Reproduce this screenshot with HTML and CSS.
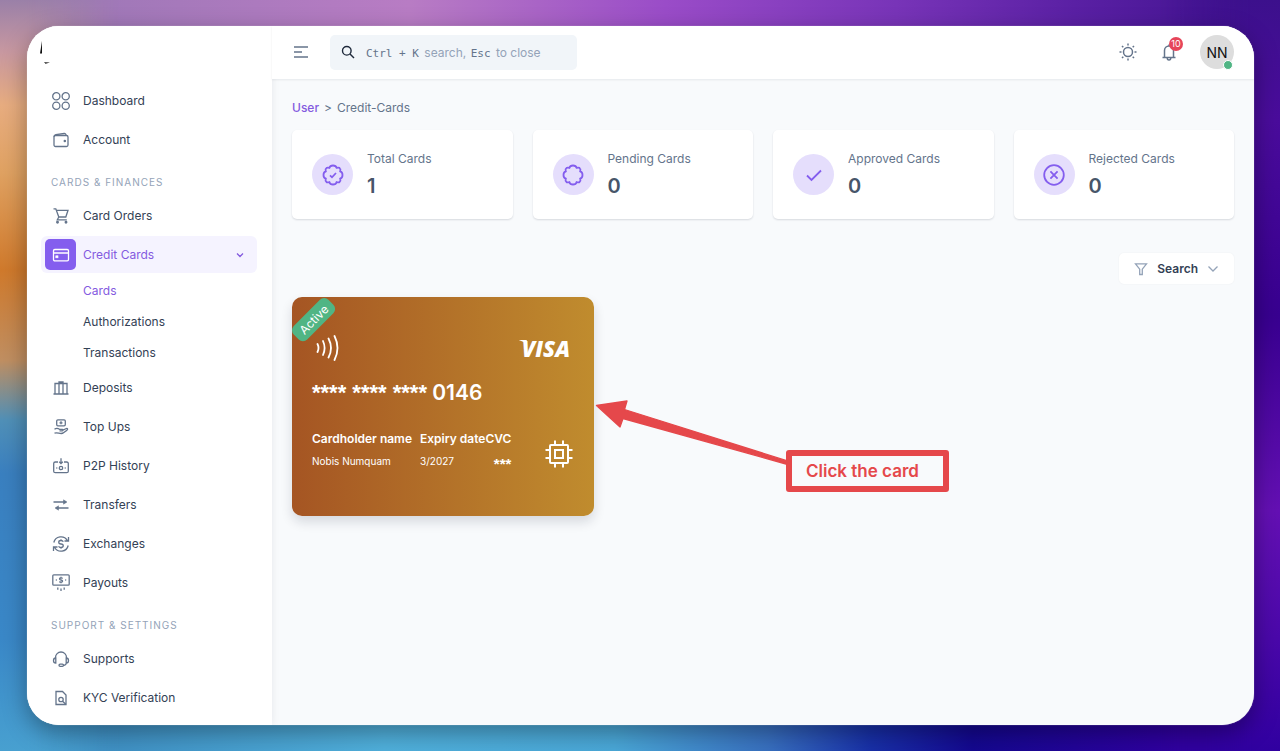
FILE: index.html
```html
<!DOCTYPE html>
<html lang="en">
  <head>
    <meta charset="UTF-8" />
    <meta name="viewport" content="width=device-width, initial-scale=1.0" />
    <title>Credit-Cards</title>
    <link rel="stylesheet" href="styles.css">
  </head>
  <body>
    <div class="window">
      <aside class="sidebar">
        <a class="brand" href="#" aria-label="Home">
          <svg width="34" height="24" viewBox="0 0 34 24"><path d="M1 0v12.500H-1z" fill="#111"/><path d="M3 21.200l6 .4-4.500 1.200z" fill="#111"/></svg>
        </a>
        <nav class="menu">
          <a class="menu-item" href="#">
            <span class="menu-icon"><svg width="20" height="20" viewBox="0 0 20 20"><circle cx="5.300" cy="5.300" r="3.600"/><circle cx="14.700" cy="5.300" r="3.600"/><circle cx="5.300" cy="14.700" r="3.600"/><circle cx="14.700" cy="14.700" r="3.600"/></svg></span>
            Dashboard
          </a>
          <a class="menu-item" href="#">
            <span class="menu-icon"><svg width="20" height="20" viewBox="0 0 20 20"><rect x="3" y="5.500" width="14" height="11" rx="1.500"/><path d="M3 6.800c0-1.600.6-2 1.800-2.200l8.400-1.100c1-.1 1.800.5 1.800 2"/><circle cx="13.800" cy="11" r=".6" fill="currentColor"/></svg></span>
            Account
          </a>

          <h2 class="menu-title">Cards &amp; Finances</h2>
          <a class="menu-item" href="#">
            <span class="menu-icon"><svg width="20" height="20" viewBox="0 0 20 20"><path d="M2.500 2.800h2.300l3 8.200h7l2.200-6.700H5.500M7.800 11l-1.500 2.800h9.500"/><circle cx="6.500" cy="16.300" r=".8" fill="currentColor"/><circle cx="15" cy="16.300" r=".8" fill="currentColor"/></svg></span>
            Card Orders
          </a>
          <a class="menu-item active" href="#">
            <span class="menu-icon"><svg width="20" height="20" viewBox="0 0 20 20"><rect x="2.500" y="4.500" width="15" height="11.300" rx="1.300"/><path d="M2.500 8h15"/><rect x="4.800" y="10.800" width="2.200" height="2" fill="currentColor" stroke-width=".6"/></svg></span>
            Credit Cards
            <svg class="chevron" width="10" height="10" viewBox="0 0 10 10"><path d="M2 3.500l3 3 3-3"/></svg>
          </a>
          <ul class="submenu">
            <li><a class="current" href="#">Cards</a></li>
            <li><a href="#">Authorizations</a></li>
            <li><a href="#">Transactions</a></li>
          </ul>
          <a class="menu-item" href="#">
            <span class="menu-icon"><svg width="20" height="20" viewBox="0 0 20 20"><path d="M2.500 16h15M4 16V5.500h12V16M8 16V4h4v12"/></svg></span>
            Deposits
          </a>
          <a class="menu-item" href="#">
            <span class="menu-icon"><svg width="20" height="20" viewBox="0 0 20 20"><rect x="5.700" y="2.800" width="8.600" height="6" rx="1.200"/><path d="M10 4.300v3M8.500 5.800h3"/><path d="M3.500 12.300c2-1.600 3.700-1 5 0h2.800c1 0 1 1.600 0 1.600H8.500M11.500 13.300l3.800-1.800c1.300-.4 1.700.8.800 1.500-2 1.600-3.600 3.500-6 3.500-2.300 0-3.600-1.200-6.600-.4"/></svg></span>
            Top Ups
          </a>
          <a class="menu-item" href="#">
            <span class="menu-icon"><svg width="20" height="20" viewBox="0 0 20 20"><path d="M7 6H4.300C3.200 6 2.700 6.500 2.700 7.500v7.700c0 1 .5 1.500 1.600 1.500h11.400c1.100 0 1.600-.5 1.600-1.500V7.500c0-1-.5-1.500-1.600-1.500H13"/><path d="M10 2.300v5M8.200 5.700L10 7.500l1.800-1.800"/><circle cx="10" cy="12" r="1.700"/><path d="M5.300 12h1M13.700 12h1"/></svg></span>
            P2P History
          </a>
          <a class="menu-item" href="#">
            <span class="menu-icon"><svg width="20" height="20" viewBox="0 0 20 20"><path d="M2.500 7h12M5.500 13h12"/><path d="M12.500 4.800L16 7l-3.500 2.200zM7.500 10.800L4 13l3.500 2.200z" fill="currentColor" stroke-width=".5"/></svg></span>
            Transfers
          </a>
          <a class="menu-item" href="#">
            <span class="menu-icon"><svg width="20" height="20" viewBox="0 0 20 20"><path d="M2.800 8.500A7.400 7.400 0 0 1 16.400 6.500M17.200 11.500A7.400 7.400 0 0 1 3.600 13.500M17.500 3v4h-4M2.500 17v-4h4"/><path d="M12.300 7.700c-.4-.8-1.200-1.200-2.300-1.200-3 0-3 3.300 0 3.500s3 3.500 0 3.500c-1.200 0-2-.4-2.400-1.300M10 5.300v1.200M10 13.500v1.200"/></svg></span>
            Exchanges
          </a>
          <a class="menu-item" href="#">
            <span class="menu-icon"><svg width="20" height="20" viewBox="0 0 20 20"><rect x="1.800" y="1.800" width="16.400" height="10.400" rx="1"/><path d="M11.600 5.500c-.8-.9-3.200-.6-3.100.5.100 1.200 3 .8 3.100 2 .1 1.200-2.400 1.500-3.200.5M10 3.800v1M10 9.200v1M4.800 7h1M14.200 7h1M6.800 14.500v2.200M10 15.500v2.500M13.200 14.500v2.200"/></svg></span>
            Payouts
          </a>

          <h2 class="menu-title">Support &amp; Settings</h2>
          <a class="menu-item" href="#">
            <span class="menu-icon"><svg width="20" height="20" viewBox="0 0 20 20"><path d="M4.500 9V8.500a5.500 5.500 0 0 1 11 0V9M4.800 9v5.200c-1.500 0-2.300-1-2.300-2.600S3.300 9 4.800 9zM15.200 9v5.200c1.500 0 2.300-1 2.300-2.600S16.700 9 15.200 9zM15.200 14.200c0 1.400-1 1.900-2.700 2.100"/><rect x="8" y="15.200" width="4.500" height="2.200" rx="1.100"/></svg></span>
            Supports
          </a>
          <a class="menu-item" href="#">
            <span class="menu-icon"><svg width="20" height="20" viewBox="0 0 20 20"><path d="M5 3.500h6.500l3.500 3.500v9.500H5z"/><circle cx="10" cy="11.500" r="2.200"/><path d="M11.600 13.200l3.200 3.100"/></svg></span>
            KYC Verification
          </a>
        </nav>
      </aside>

      <div class="main">
        <header class="topbar">
          <button class="icon-button" type="button" aria-label="Toggle sidebar">
            <svg width="18" height="18" viewBox="0 0 18 18"><path d="M2 4h14M2 9h8M2 14h14"/></svg>
          </button>
          <div class="searchbox">
            <svg width="14" height="14" viewBox="0 0 14 14"><circle cx="5.800" cy="5.800" r="4.300"/><path d="M9 9l4 4"/></svg>
            <div class="searchbox-field">
              <input id="search" type="text" />
              <label for="search"><kbd>Ctrl + K</kbd> search, <kbd>Esc</kbd> to close</label>
            </div>
          </div>
          <div class="topbar-actions">
            <button class="icon-button" type="button" aria-label="Theme">
              <svg width="20" height="20" viewBox="0 0 20 20"><circle cx="10" cy="10" r="4.500"/><path d="M10 1.500v2M10 16.500v2M1.500 10h2M16.500 10h2M4 4l1.300 1.300M14.700 14.700L16 16M4 16l1.300-1.300M14.700 5.300L16 4"/></svg>
            </button>
            <button class="icon-button" type="button" aria-label="Notifications">
              <svg width="20" height="20" viewBox="0 0 20 20"><path d="M3.500 15.500h13M5.500 15.500V8.500a4.500 4.500 0 0 1 9 0v7M10 4V2.500M8.200 15.800c0 3 3.600 3 3.600 0"/></svg>
              <span class="count">10</span>
            </button>
            <button class="avatar" type="button">NN<span class="status"></span></button>
          </div>
        </header>

        <main class="content">
          <nav class="breadcrumb"><a href="#">User</a><span>&gt;</span><span>Credit-Cards</span></nav>

          <section class="stats">
            <div class="stat">
              <span class="stat-icon"><svg width="24" height="24" viewBox="0 0 24 24"><path d="M12 2.500Q15 2.500 15.600 4.800Q18.400 4.200 18.700 5.300Q19.900 6 19.200 8.400Q21.500 9 21.500 12Q21.500 15 19.200 15.600Q19.900 18 18.700 18.700Q18 19.900 15.600 19.200Q15 21.500 12 21.500Q9 21.500 8.400 19.200Q6 19.900 5.300 18.700Q4.100 18 4.800 15.600Q2.500 15 2.500 12Q2.500 9 4.800 8.400Q4.100 6 5.300 5.300Q6 4.100 8.400 4.800Q9 2.500 12 2.500z"/><path d="M9 12.300l2 2 4-4.300"/></svg></span>
              <div><p class="stat-label">Total Cards</p><p class="stat-value">1</p></div>
            </div>
            <div class="stat">
              <span class="stat-icon"><svg width="24" height="24" viewBox="0 0 24 24"><path d="M12 2.500Q15 2.500 15.600 4.800Q18.400 4.200 18.700 5.300Q19.900 6 19.200 8.400Q21.500 9 21.500 12Q21.500 15 19.200 15.600Q19.900 18 18.700 18.700Q18 19.900 15.600 19.200Q15 21.500 12 21.500Q9 21.500 8.400 19.200Q6 19.900 5.300 18.700Q4.100 18 4.800 15.600Q2.500 15 2.500 12Q2.500 9 4.800 8.400Q4.100 6 5.300 5.300Q6 4.100 8.400 4.800Q9 2.500 12 2.500z"/></svg></span>
              <div><p class="stat-label">Pending Cards</p><p class="stat-value">0</p></div>
            </div>
            <div class="stat">
              <span class="stat-icon"><svg width="24" height="24" viewBox="0 0 24 24"><path d="M5 12.500l4.500 4.500 9.500-9.500"/></svg></span>
              <div><p class="stat-label">Approved Cards</p><p class="stat-value">0</p></div>
            </div>
            <div class="stat">
              <span class="stat-icon"><svg width="24" height="24" viewBox="0 0 24 24"><circle cx="12" cy="12" r="9.800"/><path d="M8.400 8.400l7.200 7.200M15.600 8.400l-7.200 7.200"/></svg></span>
              <div><p class="stat-label">Rejected Cards</p><p class="stat-value">0</p></div>
            </div>
          </section>

          <div class="toolbar">
            <button class="filter" type="button">
              <svg width="14" height="14" viewBox="0 0 14 14"><path d="M1.500 1.800h11L8.300 7.200v5.300H5.700V7.200z"/></svg>
              Search
              <svg width="12" height="12" viewBox="0 0 12 12"><path d="M1.500 3.500L6 8l4.500-4.500"/></svg>
            </button>
          </div>

          <section class="cards">
            <div class="card-cell">
              <a class="credit-card" href="#">
                <span class="badge">Active</span>
                <span class="card-top">
                  <svg width="30" height="26" viewBox="0 0 30 26"><path d="M5.500 9q2 4 0 8M11 6q3.200 7 0 14M16.500 3.500q5 9.500 0 19M22.500 1q6 12 0 24"/></svg>
                  <span class="visa">VISA</span>
                </span>
                <span class="card-number"><span class="stars">**** **** ****</span> 0146</span>
                <span class="card-bottom">
                  <span class="card-info holder"><b>Cardholder name</b><span>Nobis Numquam</span></span>
                  <span class="card-info"><b>Expiry date</b><span>3/2027</span></span>
                  <span class="card-info cvc"><b>CVC</b><span class="stars">***</span></span>
                  <svg class="chip" width="30" height="30" viewBox="0 0 30 30"><rect x="6" y="6" width="18" height="18" rx="1"/><rect x="11" y="11" width="8" height="8"/><path d="M11 6V1.500M19 6V1.500M11 24v4.500M19 24v4.500M6 11H1.500M6 19H1.500M24 11h4.500M24 19h4.500"/></svg>
                </span>
              </a>
              <div class="callout">
                <svg width="192" height="70" viewBox="0 0 192 70"><path d="M2.500 9.500L33 5l-2.500 8.500L192 64.500v3.500L29 22.500 26 31z"/></svg>
                <p>Click the card</p>
              </div>
            </div>
          </section>
        </main>
      </div>
    </div>
  </body>
</html>
```
FILE: styles.css
```css
* {
  box-sizing: border-box;
}

body {
  position: relative;
  margin: 0;
  padding: 26px 26px 26px 27px;
  min-height: 100vh;
  display: flex;
  font-family: Inter, "Liberation Sans", sans-serif;
  font-size: 12px;
  color: #334155;
  background:
    linear-gradient(90deg, #9a80a8 0, #a078b8 8%, #b87cc4 32%, #9a4cc8 52%, #7834b8 70%, #5a20a4 84%, #3c108c 100%) top / 100% 50% no-repeat,
    linear-gradient(90deg, #48a0d0 0, #3f90c4 8%, #50b0dc 30%, #4aa8d8 48%, #3870c0 60%, #1830a8 68%, #140890 76%, #3000a0 92%, #3000a0 100%) bottom / 100% 50% no-repeat;
}

/* side colours of the backdrop, faded into the top and bottom ones */
body::before {
  content: "";
  position: absolute;
  inset: 0;
  background:
    linear-gradient(180deg, #9a80a8 0, #c898a0 7%, #e8ad80 14%, #e0a262 23%, #d07a2c 36%, #c08f62 48%, #5090b8 56%, #3a80c0 63%, #3a88c8 85%, #48a0d0 100%) left / 50% 100% no-repeat,
    linear-gradient(180deg, #3c108c 0, #4a0c9c 16%, #380090 42%, #6410b4 68%, #4a08aa 85%, #3000a0 100%) right / 50% 100% no-repeat;
  mask-image: linear-gradient(90deg, #000 27px, transparent 120px, transparent calc(100% - 120px), #000 calc(100% - 27px));
}

a {
  color: inherit;
  text-decoration: none;
}

button {
  font: inherit;
  color: inherit;
  border: none;
  background: none;
  padding: 0;
  cursor: pointer;
}

p {
  margin: 0;
}

svg {
  fill: none;
  stroke: currentColor;
  stroke-width: 1.3;
  flex-shrink: 0;
  display: block;
}

.window {
  position: relative;
  flex: 1;
  display: flex;
  border-radius: 32px;
  overflow: hidden;
  background: #f8fafc;
  box-shadow: 0 0 1px rgba(255, 255, 255, 0.8), 0 8px 24px rgba(0, 0, 0, 0.35);
}

/* sidebar */
.sidebar {
  width: 245px;
  flex-shrink: 0;
  padding: 15px;
  padding-bottom: 6px;
  padding-left: 14px;
  background: #fff;
  box-shadow: 0 0 8px rgba(15, 23, 42, 0.08);
}

.brand {
  display: block;
  height: 41px;
}

.brand svg {
  stroke: none;
  overflow: visible;
}

.menu {
  display: flex;
  flex-direction: column;
}

.menu-item {
  display: flex;
  align-items: center;
  gap: 7px;
  height: 37px;
  margin-bottom: 2px;
  padding: 3px 12px 3px 4px;
  border-radius: 6px;
}

.menu-icon {
  display: flex;
  align-items: center;
  justify-content: center;
  width: 31px;
  height: 31px;
  border-radius: 5px;
  color: #64748b;
}

.menu-item.active {
  background: #f5f3ff;
  color: #845adf;
}

.active .menu-icon {
  background: #845eee;
  color: #fff;
}

.chevron {
  margin-left: auto;
}

.menu-title {
  margin: 0;
  padding: 15px 10px 7px;
  font-size: 10px;
  font-weight: 400;
  line-height: 15px;
  letter-spacing: 1px;
  text-transform: uppercase;
  color: #94a3b8;
}

.submenu {
  list-style: none;
  margin: 0 0 1px;
  padding: 0 0 0 42px;
  line-height: 31px;
}

.submenu .current {
  color: #845adf;
}

/* top bar */
.main {
  flex: 1;
  min-width: 0;
}

.topbar {
  display: flex;
  align-items: center;
  gap: 20px;
  height: 53px;
  padding: 0 20px 1px;
  background: #fff;
  box-shadow: 0 1px 2px rgba(15, 23, 42, 0.08);
}

.icon-button {
  position: relative;
  color: #64748b;
}

.icon-button svg {
  stroke-width: 1.5;
}

.searchbox {
  display: flex;
  align-items: center;
  gap: 10px;
  width: 247px;
  height: 35px;
  padding: 0 11px;
  border-radius: 5px;
  background: #f1f5f9;
  color: #1e293b;
}

.searchbox svg {
  stroke-width: 1.4;
}

.searchbox-field {
  flex: 1;
  display: grid;
  align-items: center;
}

.searchbox-field input,
.searchbox-field label {
  grid-area: 1 / 1;
}

.searchbox-field input {
  width: 100%;
  border: none;
  outline: none;
  background: none;
}

.searchbox-field label {
  color: #94a3b8;
  white-space: nowrap;
  pointer-events: none;
}

.searchbox-field input:focus + label {
  visibility: hidden;
}

kbd {
  margin: 0 2px 0 1px;
  font-family: "DejaVu Sans Mono", monospace;
  font-size: 11px;
  color: #64748b;
}

.topbar-actions {
  display: flex;
  align-items: center;
  gap: 21px;
  margin-left: auto;
}

.count {
  position: absolute;
  top: -5px;
  right: -4px;
  width: 14px;
  height: 14px;
  border-radius: 50%;
  background: #e6455a;
  color: #fff;
  font-size: 9px;
  line-height: 14px;
  text-align: center;
}

.avatar {
  position: relative;
  width: 34px;
  height: 34px;
  border-radius: 50%;
  background: #ddd;
  color: #111;
  font-size: 14px;
}

.status {
  position: absolute;
  right: 1px;
  bottom: -1px;
  width: 10px;
  height: 10px;
  border: 1px solid #fff;
  border-radius: 50%;
  background: #50b584;
}

/* content */
.content {
  padding: 20px;
}

.breadcrumb {
  display: flex;
  gap: 5px;
  margin-bottom: 13px;
  line-height: 18px;
  color: #64748b;
}

.breadcrumb a {
  color: #845adf;
  font-weight: 500;
}

.stats {
  display: grid;
  grid-template-columns: repeat(4, 1fr);
  gap: 20px;
}

.stat {
  display: flex;
  align-items: center;
  gap: 14px;
  height: 89px;
  padding: 0 20px;
  border-radius: 5px;
  background: #fff;
  box-shadow: 0 1px 2px rgba(15, 23, 42, 0.14);
}

.stat-icon {
  display: flex;
  align-items: center;
  justify-content: center;
  width: 41px;
  height: 41px;
  border-radius: 50%;
  background: #e5defc;
  color: #845eee;
}

.stat-icon svg {
  stroke-width: 1.8;
}

.stat-label {
  line-height: 20px;
  color: #64748b;
}

.stat-value {
  margin-top: 3px;
  font-size: 20px;
  font-weight: 600;
  line-height: 28px;
  color: #475569;
}

.toolbar {
  display: flex;
  justify-content: flex-end;
  margin: 34px 0 13px;
}

.filter {
  display: flex;
  align-items: center;
  gap: 9px;
  height: 31px;
  padding: 0 15px;
  border-radius: 5px;
  background: #fff;
  box-shadow: 0 0 2px rgba(15, 23, 42, 0.06);
  font-weight: 600;
}

.filter svg {
  color: #94a3b8;
}

/* credit cards */
.cards {
  display: grid;
  grid-template-columns: repeat(3, 1fr);
  gap: 18px;
}

.card-cell {
  position: relative;
}

.credit-card {
  position: relative;
  display: flex;
  flex-direction: column;
  height: 219px;
  padding: 38px 20px 0;
  border-radius: 10px;
  background: linear-gradient(90deg, #a55523, #c08c2e);
  box-shadow: 0 6px 12px rgba(15, 23, 42, 0.14);
  color: #fff;
}

.badge {
  position: absolute;
  top: 13px;
  left: -3px;
  padding: 0 7px;
  border-radius: 6px;
  background: #50b584;
  line-height: 19px;
  transform: rotate(-45deg);
}

.card-top {
  display: flex;
  align-items: center;
  justify-content: space-between;
  height: 26px;
  padding-right: 4px;
}

.card-top svg {
  stroke-width: 1.8;
  stroke-linecap: round;
}

.visa {
  position: relative;
  font-family: "Open Sans", sans-serif;
  font-size: 22px;
  font-style: italic;
  font-weight: 800;
  line-height: 26px;
}

/* flick on the left of the V */
.visa::before {
  content: "";
  position: absolute;
  top: 5px;
  left: -3px;
  width: 8px;
  height: 5px;
  background: #fff;
  clip-path: polygon(0 0, 100% 0, 100% 100%, 60% 40%);
}

.stars {
  font-family: "Liberation Sans", sans-serif;
  font-weight: 700;
}

.card-number {
  margin-top: 20px;
  font-size: 21px;
  font-weight: 600;
  line-height: 24px;
}

.card-number .stars {
  font-size: 22px;
}

.card-bottom {
  display: flex;
  align-items: flex-end;
  margin-top: 26px;
}

.card-info {
  display: flex;
  flex-direction: column;
  gap: 6px;
  font-size: 10px;
  line-height: 16px;
}

.card-info b {
  font-size: 12px;
  font-weight: 600;
}

.holder {
  margin-right: 8px;
}

.cvc {
  text-align: right;
}

.cvc .stars {
  padding-top: 6px;
  font-size: 15px;
  line-height: 10px;
}

.chip {
  margin-left: auto;
  stroke-width: 2;
}

/* arrow and label beside the card */
.callout {
  position: absolute;
  top: 99px;
  left: 100%;
  display: flex;
  align-items: flex-start;
  color: #e5484b;
}

.callout svg {
  fill: currentColor;
  stroke-linejoin: round;
}

.callout p {
  width: 163px;
  margin-top: 54px;
  padding: 0 14px;
  border: 6px solid #e5484b;
  border-radius: 3px;
  font-size: 17px;
  font-weight: 600;
  line-height: 30px;
}
```
